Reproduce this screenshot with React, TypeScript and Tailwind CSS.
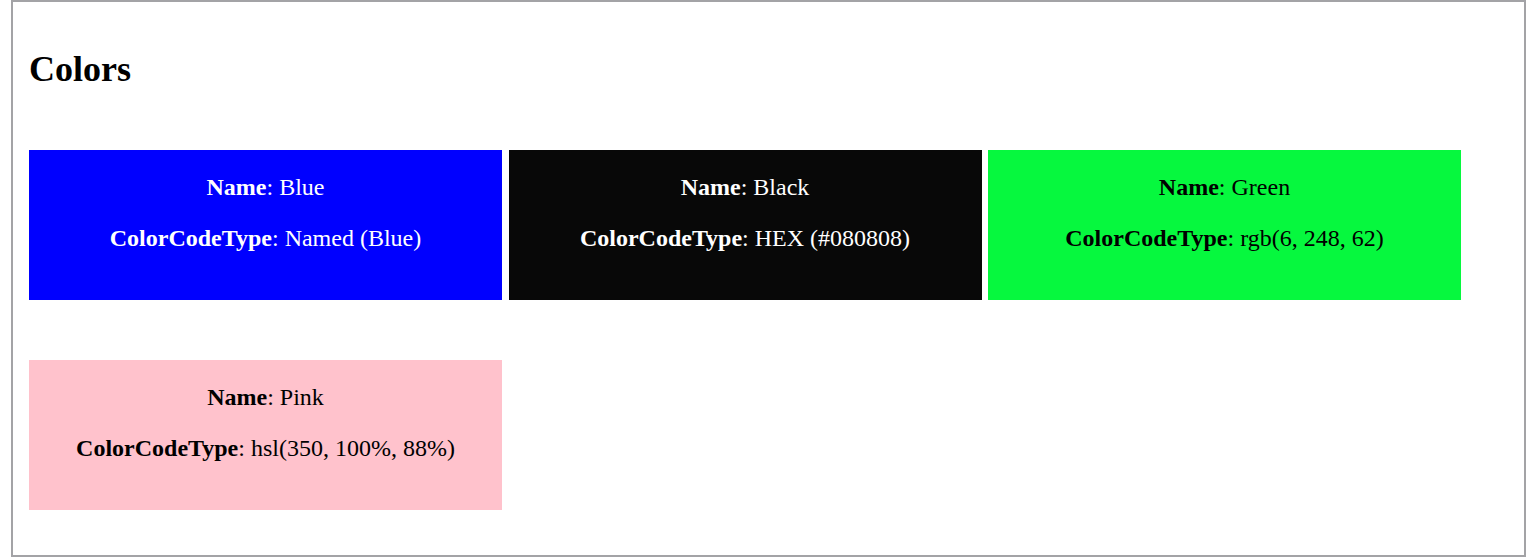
const colors = [
  { name: 'Blue', code: 'Named (Blue)', bg: 'bg-[#0000ff]', text: 'text-white' },
  { name: 'Black', code: 'HEX (#080808)', bg: 'bg-[#080808]', text: 'text-white' },
  { name: 'Green', code: 'rgb(6, 248, 62)', bg: 'bg-[rgb(6,248,62)]', text: 'text-black' },
  { name: 'Pink', code: 'hsl(350, 100%, 88%)', bg: 'bg-[hsl(350,100%,88%)]', text: 'text-black' },
];

export default function App() {
  return (
    <div className="h-[557px] bg-white pl-[11px] font-['Liberation_Serif',serif]">
      <div className="h-full border-2 border-[#a3a3a6] px-[16px] pt-[47px]">
        <h1 className="text-[36px] font-bold leading-[41px] text-black">Colors</h1>
        <div className="mt-[60px] flex flex-wrap gap-x-[6.5px] gap-y-[60px]">
          {colors.map((color) => (
            <div
              key={color.name}
              className={`flex h-[150px] w-[473px] flex-col items-center gap-[21px] pt-[22px] text-[24px] leading-[30px] ${color.bg} ${color.text}`}
            >
              <p>
                <b>Name</b>: {color.name}
              </p>
              <p>
                <b>ColorCodeType</b>: {color.code}
              </p>
            </div>
          ))}
        </div>
      </div>
    </div>
  );
}
